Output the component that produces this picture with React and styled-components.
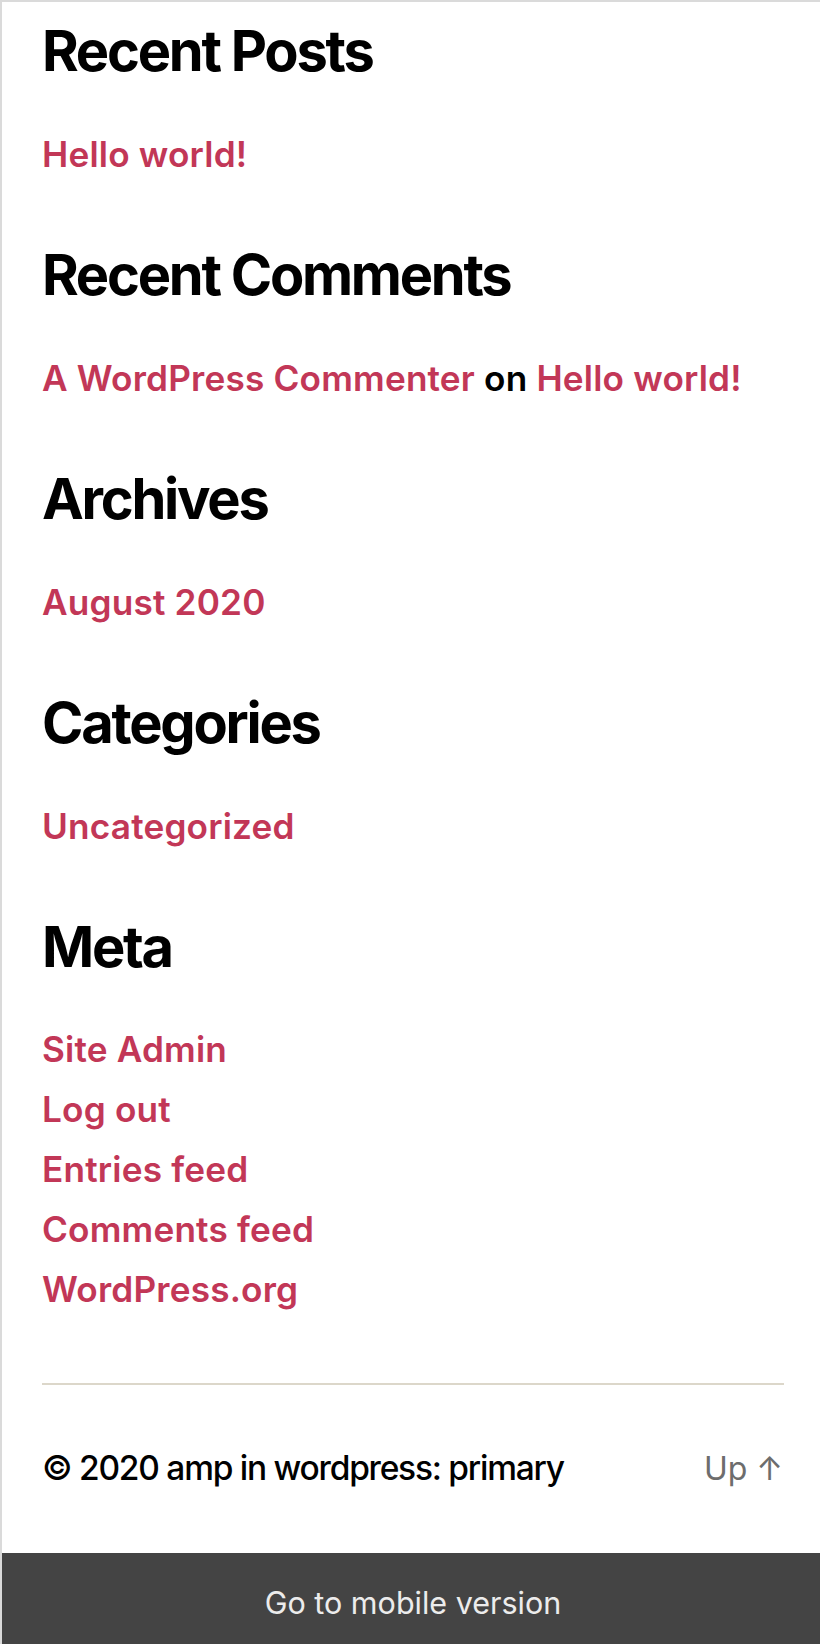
import React from 'react'
import styled, { createGlobalStyle } from 'styled-components'

const GlobalStyle = createGlobalStyle`
  body {
    margin: 0;
    background: #fff;
    font-family: Inter, "Noto Sans", sans-serif;
    overflow-x: hidden;
  }
`

const Frame = styled.div`
  border-top: 2px solid #dadada;
  border-left: 2px solid #dadada;
  background: #fff;
`

const Content = styled.div`
  padding: 14px 36px 0 40px;
`

const Widget = styled.section`
  margin-bottom: 56px;

  &:last-child {
    margin-bottom: 0;
  }
`

const WidgetTitle = styled.h2`
  margin: 0 0 37.9px;
  font-size: 56px;
  line-height: 70px;
  font-weight: 700;
  letter-spacing: -0.04em;
  color: #000;
`

const LinkList = styled.ul`
  list-style: none;
  margin: 0;
  padding: 0;
`

const Item = styled.li`
  font-size: 35.2px;
  line-height: 60px;
  font-weight: 600;
  letter-spacing: 0.005em;
  color: #000;
`

const WidgetLink = styled.a`
  color: #c23757;
  text-decoration: none;
`

const Rule = styled.hr`
  margin: 64px 0 0;
  border: none;
  border-top: 2px solid #dcd7ca;
`

const Credits = styled.footer`
  display: flex;
  justify-content: space-between;
  align-items: baseline;
  padding: 63px 0 64px;
`

const Copyright = styled.p`
  margin: 0;
  font-size: 33.5px;
  line-height: 1.2;
  font-weight: 500;
  letter-spacing: -0.037em;
  color: #000;
`

const ToTop = styled.a`
  font-size: 32px;
  line-height: 1.2;
  color: #6d6d6d;
  text-decoration: none;
  padding-right: 1px;
`

const MobileBar = styled.a`
  display: block;
  background: #444;
  color: #ececec;
  text-align: center;
  font-size: 30.5px;
  line-height: 45px;
  padding: 27px 0 27px 4px;
  text-decoration: none;
`

const widgets = [
  { title: 'Recent Posts', items: [[{ link: 'Hello world!' }]] },
  {
    title: 'Recent Comments',
    items: [[{ link: 'A WordPress Commenter' }, { text: ' on ' }, { link: 'Hello world!' }]],
  },
  { title: 'Archives', items: [[{ link: 'August 2020' }]] },
  { title: 'Categories', items: [[{ link: 'Uncategorized' }]] },
  {
    title: 'Meta',
    items: ['Site Admin', 'Log out', 'Entries feed', 'Comments feed', 'WordPress.org'].map(l => [{ link: l }]),
  },
]

const App = () => (
  <>
    <GlobalStyle />
    <Frame>
      <Content>
        {widgets.map(w => (
          <Widget key={w.title}>
            <WidgetTitle>{w.title}</WidgetTitle>
            <LinkList>
              {w.items.map((parts, i) => (
                <Item key={i}>
                  {parts.map((p, j) =>
                    p.link ? <WidgetLink key={j} href="#">{p.link}</WidgetLink> : <span key={j}>{p.text}</span>
                  )}
                </Item>
              ))}
            </LinkList>
          </Widget>
        ))}
        <Rule />
        <Credits>
          <Copyright>© 2020 amp in wordpress: primary</Copyright>
          <ToTop href="#">Up ↑</ToTop>
        </Credits>
      </Content>
      <MobileBar href="#">Go to mobile version</MobileBar>
    </Frame>
  </>
)

export default App
